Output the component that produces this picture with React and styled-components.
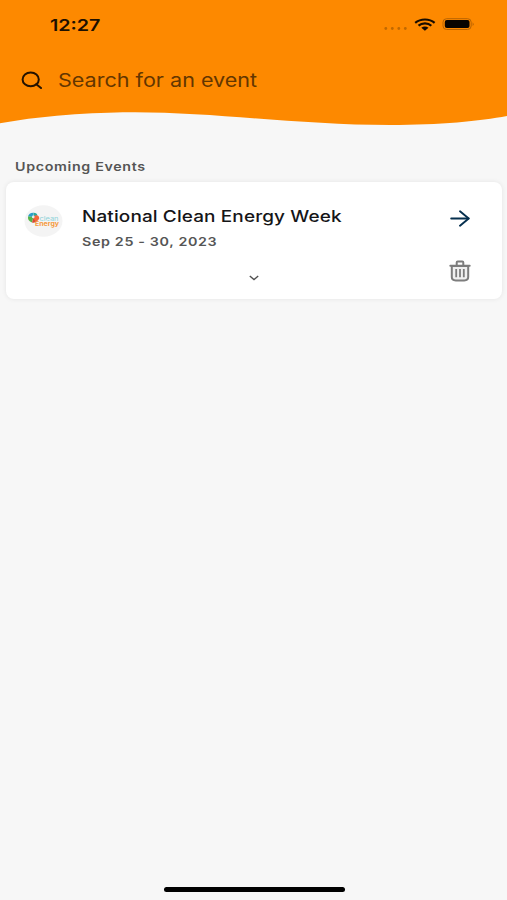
import React from 'react';
import styled, { createGlobalStyle, ThemeProvider } from 'styled-components';

const theme = {
  colors: {
    orange: '#fd8900',
    page: '#f7f7f7',
    title: '#151517',
    grey: '#555',
    navy: '#06304f',
    brown: '#633600',
  },
};

const GlobalStyle = createGlobalStyle`
  * {
    box-sizing: border-box;
  }
  body {
    margin: 0;
    background: #f7f7f7;
    font-family: Inter, 'Liberation Sans', sans-serif;
  }
`;

const Screen = styled.div`
  display: flex;
  flex-direction: column;
  width: 100%;
  height: 900px;
  overflow: hidden;
  background: ${props => props.theme.colors.page};
`;

const StyledHeader = styled.header`
  height: 110px;
  background: ${props => props.theme.colors.orange};
`;

const StatusBar = styled.div`
  display: flex;
  align-items: center;
  justify-content: space-between;
  height: 49px;
  padding: 1px 33px 0 50px;
`;

const StatusIcons = styled.div`
  display: flex;
  align-items: center;
  padding-top: 2px;
`;

// wide lettering, stretched from the left edge
const Label = styled.span`
  display: block;
  width: max-content;
  white-space: nowrap;
  transform: scaleX(${props => props.$stretch || 1.2});
  transform-origin: left center;
`;

const Clock = styled(Label)`
  font-size: 16px;
  line-height: 20px;
  font-weight: 600;
  color: #1d1000;
`;

const SearchBar = styled.div`
  display: flex;
  align-items: center;
  gap: 15px;
  height: 61px;
  padding: 0 21px;
`;

const Placeholder = styled(Label)`
  font-size: 18.5px;
  line-height: 24px;
  color: ${props => props.theme.colors.brown};
`;

const Wave = styled.svg`
  display: block;
  flex: none;
  width: 100%;
  height: 17px;
`;

const Main = styled.main`
  flex: 1;
  padding: 31px 5px 0 6px;
`;

const SectionTitle = styled(Label)`
  margin: 0 0 7px 9px;
  font-size: 12px;
  line-height: 17px;
  font-weight: 600;
  letter-spacing: 0.55px;
  color: ${props => props.theme.colors.grey};
`;

const Card = styled.article`
  display: grid;
  grid-template-columns: 76px 1fr 24px;
  height: 117px;
  padding: 23px 30px 0 18px;
  border-radius: 8px;
  background: white;
  box-shadow: 0 0 5px rgba(0, 0, 0, 0.08);
`;

const Logo = styled.svg`
  display: block;
  width: 39px;
  height: 32px;
`;

const Details = styled.div`
  display: flex;
  flex-direction: column;
  margin-left: -18px;
`;

const EventName = styled(Label)`
  font-size: 16px;
  line-height: 22px;
  font-weight: 500;
  letter-spacing: 0.1px;
  color: ${props => props.theme.colors.title};
`;

const EventDate = styled(Label)`
  margin-top: 6px;
  font-size: 12px;
  line-height: 18px;
  font-weight: 600;
  letter-spacing: 0.55px;
  color: ${props => props.theme.colors.grey};
`;

const Chevron = styled.svg`
  display: block;
  width: 10px;
  height: 6px;
  margin: 24px 0 0 167px;
`;

const Actions = styled.div`
  display: flex;
  flex-direction: column;
  align-items: center;
  gap: 33px;
  padding: 5px 1px 0 0;
`;

const IconButton = styled.button`
  display: block;
  padding: 0;
  border: 0;
  background: none;
  line-height: 0;
`;

const Footer = styled.footer`
  display: flex;
  justify-content: center;
  height: 13px;
  padding-left: 1px;
`;

const HomeIndicator = styled.div`
  width: 181px;
  height: 5px;
  border-radius: 3px;
  background: black;
`;

function SignalIcon() {
  return (
    <svg width="98" height="18" viewBox="0 0 98 18">
      <g fill="#c06900">
        <circle cx="9.8" cy="11.5" r="1.4" />
        <circle cx="16.3" cy="11.5" r="1.4" />
        <circle cx="22.8" cy="11.5" r="1.4" />
        <circle cx="29.3" cy="11.5" r="1.4" />
      </g>
      <g fill="none" stroke="#160c00" strokeWidth="2.2">
        <path d="M39.2 5.8 C44.5 1.4 53.5 1.4 58.6 5.8" />
        <path d="M42.5 8.7 C46 5.7 52 5.7 55.3 8.7" />
      </g>
      <path d="M45.3 10.8 C47.5 9.1 50.3 9.1 52.5 10.8 L48.9 13.8 Z" fill="#160c00" />
      <rect x="67" y="1.7" width="28.2" height="10.8" rx="3.6" fill="none" stroke="#b86300" strokeWidth="1" />
      <rect x="68.8" y="3.1" width="24.7" height="8" rx="2" fill="#080400" />
      <path d="M96.6 5.3 Q98.6 7.2 96.6 9.1 Z" fill="#b86300" />
    </svg>
  );
}

function SearchIcon() {
  return (
    <svg width="22" height="18" viewBox="0 0 22 18" fill="none" stroke="#241300" strokeWidth="2">
      <ellipse cx="9.7" cy="8.4" rx="8.1" ry="6.9" />
      <path d="M15.3 13.2 L20 17" strokeLinecap="round" />
    </svg>
  );
}

function CleanEnergyLogo() {
  return (
    <Logo viewBox="0 0 39 32">
      <ellipse cx="19.5" cy="16" rx="19" ry="15.7" fill="#f4f4f4" />
      <path d="M4 11.5 Q5 7.5 9.5 7.7 L9 12 Z" fill="#2c9fc8" />
      <path d="M9.5 7.7 Q13 7.6 13.4 10.5 L9.5 12 Z" fill="#23a79d" />
      <path d="M4 11.5 Q3.6 16 8 17.5 L9.5 12 Z" fill="#55b548" />
      <path d="M8 17.5 L9.5 12.5 L13 16 Q11 18.6 8 17.5 Z" fill="#d64b36" />
      <path d="M10.5 10.5 Q15.5 9.2 15.2 13.8 L12.5 17 L9.6 14 Z" fill="#f4663a" />
      <circle cx="9.2" cy="11.9" r="1.3" fill="#e3eeee" />
      <text x="15.5" y="16" fontFamily="Inter, sans-serif" fontSize="6" fill="#8fd3d9" textLength="19" lengthAdjust="spacingAndGlyphs">clean</text>
      <text x="11" y="21.2" fontFamily="Inter, sans-serif" fontSize="6.4" fontWeight="700" fill="#f59a3c" textLength="24" lengthAdjust="spacingAndGlyphs">Energy</text>
    </Logo>
  );
}

function ArrowIcon() {
  return (
    <svg width="20" height="17" viewBox="0 0 20 17" fill="none" stroke="#06304f" strokeWidth="1.9" strokeLinecap="round" strokeLinejoin="round">
      <path d="M1.2 8.5 H18.5" />
      <path d="M10 1.3 L18.7 8.5 L10 15.7" />
    </svg>
  );
}

function TrashIcon() {
  return (
    <svg width="22" height="22" viewBox="0 0 22 22" fill="none" stroke="#7d7d7d" strokeWidth="2">
      <path d="M2.8 6 V17 Q2.8 20.4 6.7 20.4 H15.3 Q19.2 20.4 19.2 17 V6 Z" fill="#f0f0f0" />
      <path d="M1.3 5.8 H20.7" strokeLinecap="round" />
      <path d="M7.7 5.2 V2.6 Q7.7 1.6 8.7 1.6 H13.3 Q14.3 1.6 14.3 2.6 V5.2" />
      <path d="M7.2 9 V17.2 M11 9 V17.2 M14.8 9 V17.2" strokeWidth="1.8" />
    </svg>
  );
}

function Header() {
  return (
    <>
      <StyledHeader>
        <StatusBar>
          <Clock $stretch={1.23}>12:27</Clock>
          <StatusIcons>
            <SignalIcon />
          </StatusIcons>
        </StatusBar>
        <SearchBar>
          <SearchIcon />
          <Placeholder $stretch={1.165}>Search for an event</Placeholder>
        </SearchBar>
      </StyledHeader>
      <Wave viewBox="0 0 507 17" preserveAspectRatio="none">
        <path
          d="M0 -1 V13.3 C50 4 105 2.2 135 2.2 C215 2.2 300 15 390 15 C440 15 480 11 507 6 V-1 Z"
          fill={theme.colors.orange}
        />
      </Wave>
    </>
  );
}

function EventCard({ name, date }) {
  return (
    <Card>
      <CleanEnergyLogo />
      <Details>
        <EventName $stretch={1.185}>{name}</EventName>
        <EventDate $stretch={1.19}>{date}</EventDate>
        <Chevron viewBox="0 0 10 6" fill="none" stroke="#505050" strokeWidth="1.4">
          <path d="M0.8 1 L5 4.6 L9.2 1" />
        </Chevron>
      </Details>
      <Actions>
        <IconButton aria-label="Open event"><ArrowIcon /></IconButton>
        <IconButton aria-label="Delete event"><TrashIcon /></IconButton>
      </Actions>
    </Card>
  );
}

function App() {
  return (
    <ThemeProvider theme={theme}>
      <GlobalStyle />
      <Screen>
        <Header />
        <Main>
          <SectionTitle $stretch={1.19}>Upcoming Events</SectionTitle>
          <EventCard name="National Clean Energy Week" date="Sep 25 - 30, 2023" />
        </Main>
        <Footer>
          <HomeIndicator />
        </Footer>
      </Screen>
    </ThemeProvider>
  );
}

export default App;
